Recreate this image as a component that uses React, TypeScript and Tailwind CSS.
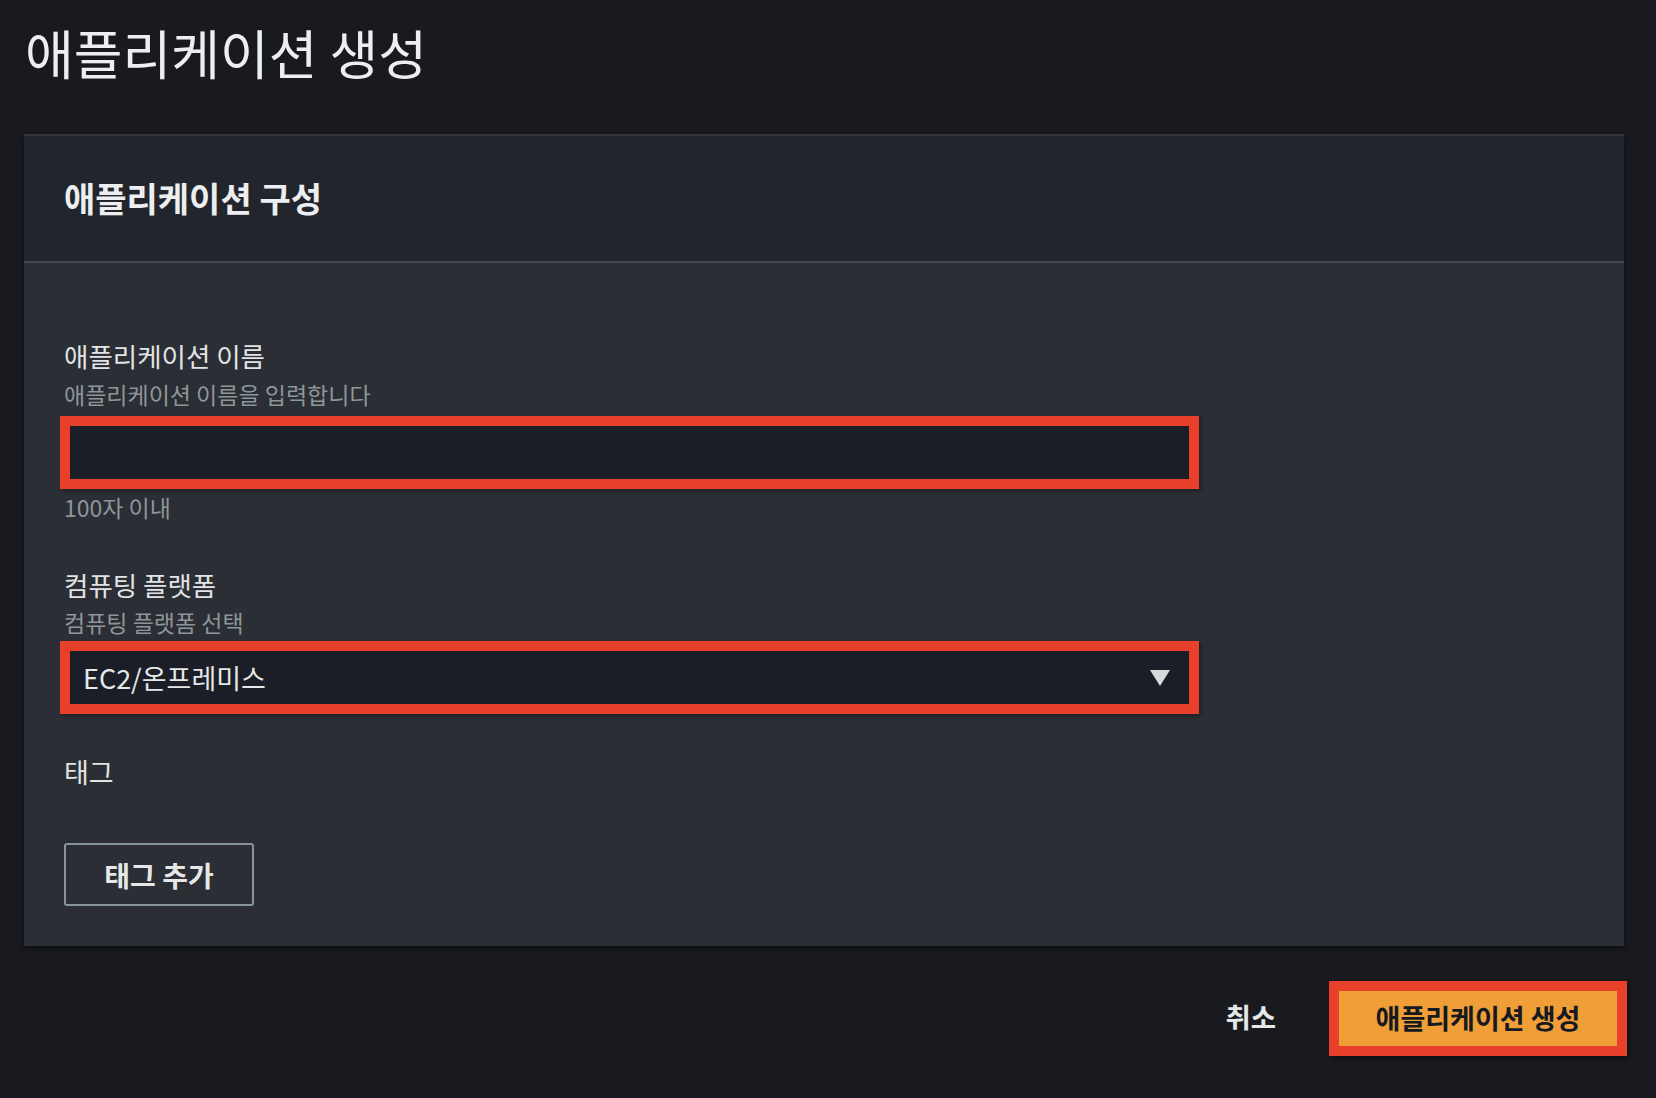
import React from "react";

const font = { fontFamily: '"Noto Sans CJK KR", "Noto Sans", sans-serif' };

export default function App() {
  return (
    <div
      className="min-h-screen w-full bg-[#191a1f] pl-[24px] pr-[32px] pt-[22px] pb-[40px] text-[#e6e8e8]"
      style={font}
    >
      <h1 className="text-[53px] leading-[60px] font-normal text-[#eceeef] ml-[1px]">
        애플리케이션 생성
      </h1>

      <section className="mt-[52px] bg-[#2b2e34] border-t-2 border-[#34363c] shadow-[0_2px_4px_rgba(0,0,0,0.55)]">
        <div className="h-[127px] bg-[#23252d] border-b-2 border-[#43474f] px-[40px] flex items-center">
          <h2 className="text-[34px] leading-[40px] font-bold text-[#eceeef] -mt-[2px]">
            애플리케이션 구성
          </h2>
        </div>

        <div className="pl-[40px] pr-[40px] pt-[77px] pb-[40px]">
          <div className="text-[26.5px] leading-[32px] font-normal text-[#e1e4e5]">
            애플리케이션 이름
          </div>
          <div className="mt-[8px] text-[23px] leading-[28px] text-[#8d9699]">
            애플리케이션 이름을 입력합니다
          </div>
          <div className="mt-[8px] -ml-[4px] w-[1139px] h-[73px] border-[10px] border-[#e8402a] bg-[#1b1e26] shadow-[2px_2px_4px_rgba(0,0,0,0.35)]" />
          <div className="mt-[4px] text-[23px] leading-[28px] text-[#8d9699]">100자 이내</div>

          <div className="mt-[48px] text-[26.5px] leading-[32px] font-normal text-[#e1e4e5]">
            컴퓨팅 플랫폼
          </div>
          <div className="mt-[7px] text-[23px] leading-[28px] text-[#8d9699]">
            컴퓨팅 플랫폼 선택
          </div>
          <div className="mt-[5px] -ml-[4px] w-[1139px] h-[73px] border-[10px] border-[#e8402a] bg-[#1b1e26] shadow-[2px_2px_4px_rgba(0,0,0,0.35)] flex items-center justify-between pl-[13px] pr-[19px]">
            <span className="text-[27px] leading-[32px] font-normal text-[#e6e8e8]">
              EC2/온프레미스
            </span>
            <svg width="20" height="16" viewBox="0 0 20 16" aria-hidden>
              <path d="M0 0 H20 L10 16 Z" fill="#d5dbdb" />
            </svg>
          </div>

          <div className="mt-[42px] text-[27px] leading-[32px] font-normal text-[#e1e4e5]">태그</div>

          <button className="mt-[55px] w-[190px] h-[63px] border-2 border-[#879596] rounded-[3px] flex items-center justify-center text-[28px] font-bold text-[#e6e8e8]">
            태그 추가
          </button>
        </div>
      </section>

      <div className="mt-[35px] -mr-[3px] flex items-center justify-end">
        <button className="text-[27.5px] leading-[32px] font-bold text-[#e6e8e8] mr-[53px] mb-[5px]">취소</button>
        <button className="w-[298px] h-[75px] border-[10px] border-[#e8402a] bg-[#f09f38] shadow-[2px_2px_4px_rgba(0,0,0,0.4)] flex items-center justify-center text-[27px] font-bold text-[#16191f]">
          애플리케이션 생성
        </button>
      </div>
    </div>
  );
}
